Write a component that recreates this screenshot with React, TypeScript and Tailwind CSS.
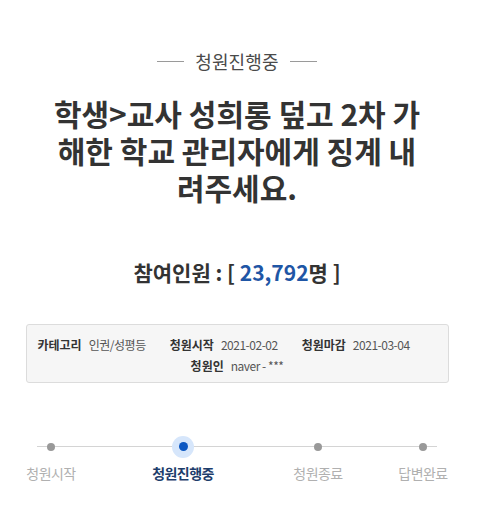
import React from "react";

const font = { fontFamily: '"Noto Sans CJK KR", "Noto Sans", sans-serif' };

const steps = [
  { label: "청원시작", w: "w-[102px]", active: false },
  { label: "청원진행중", w: "w-[162px]", active: true },
  { label: "청원종료", w: "w-[108px]", active: false },
  { label: "답변완료", w: "w-[102px]", active: false },
];

function InfoItem({ label, value }: { label: string; value: string }) {
  return (
    <span className="flex items-center gap-[7px]">
      <span className="font-bold text-[#333]">{label}</span>
      <span className="text-[#555] tracking-[-0.04em]">{value}</span>
    </span>
  );
}

export default function App() {
  return (
    <div className="w-[480px] h-[506px] bg-white" style={font}>
      <div className="w-[474px] flex flex-col items-center">
        {/* status header */}
        <div className="mt-[49px] flex items-center gap-[11px]">
          <span className="w-[27px] h-px bg-[#9a9a9a]" />
          <span className="text-[18px] leading-[24px] text-[#4a4a4a] tracking-[0.01em]">청원진행중</span>
          <span className="w-[27px] h-px bg-[#9a9a9a]" />
        </div>

        {/* title */}
        <h1 className="mt-[22px] text-center text-[30px] leading-[37px] font-bold text-[#333]">
          학생&gt;교사 성희롱 덮고 2차 가
          <br />
          해한 학교 관리자에게 징계 내
          <br />
          려주세요.
        </h1>

        {/* count */}
        <div className="mt-[52px] text-[21px] leading-[28px] font-bold text-[#333]">
          참여인원 : [ <span className="text-[#1f56a5]">23,792</span>명 ]
        </div>

        {/* info box */}
        <div className="mt-[38px] w-[423px] h-[59px] rounded-[3px] border border-[#dcdcdc] bg-[#f6f6f6] text-[12px] leading-[18px] flex flex-col pt-[11px]">
          <div className="flex pl-[11px] gap-[24px]">
            <InfoItem label="카테고리" value="인권/성평등" />
            <InfoItem label="청원시작" value="2021-02-02" />
            <InfoItem label="청원마감" value="2021-03-04" />
          </div>
          <div className="flex justify-center mt-[3px]">
            <InfoItem label="청원인" value="naver - ***" />
          </div>
        </div>

        {/* progress */}
        <div className="mt-[53px] w-[474px] relative">
          <div className="absolute left-[37px] right-[37px] top-[10px] h-px bg-[#d4d4d4]" />
          <div className="flex">
            {steps.map((s) => (
              <div key={s.label} className={`${s.w} flex flex-col items-center`}>
                <div className="h-[21px] flex items-center justify-center">
                  {s.active ? (
                    <span className="relative w-[22px] h-[22px] rounded-full bg-[#d6e6fb] flex items-center justify-center">
                      <span className="w-[9px] h-[9px] rounded-full bg-[#0b57c2]" />
                    </span>
                  ) : (
                    <span className="relative w-[8px] h-[8px] rounded-full bg-[#999]" />
                  )}
                </div>
                <span
                  className={`mt-[6px] text-[14px] leading-[20px] tracking-[-0.04em] ${
                    s.active ? "font-bold text-[#1d3d6b]" : "text-[#b0b0b0]"
                  }`}
                >
                  {s.label}
                </span>
              </div>
            ))}
          </div>
        </div>
      </div>
    </div>
  );
}
